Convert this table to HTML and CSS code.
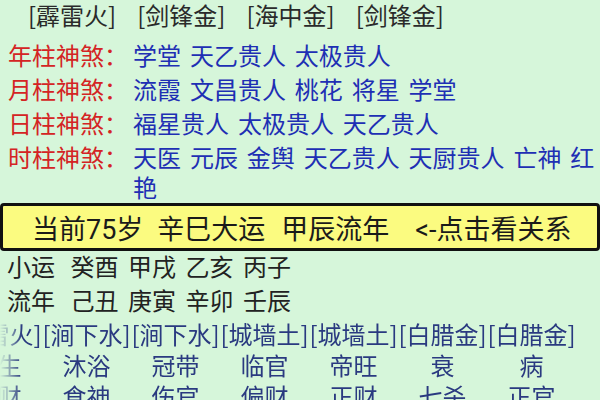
FILE: index.html
```html
<!DOCTYPE html>
<html lang="zh-CN">
<head>
<meta charset="utf-8">
<link rel="stylesheet" href="styles.css">
</head>
<body>
<div class="page">
  <div class="nayin-top">
    <span>[霹雷火]</span><span>[剑锋金]</span><span>[海中金]</span><span>[剑锋金]</span>
  </div>
  <div class="shensha">
    <div class="ss-row"><div class="ss-label">年柱神煞：</div><div class="ss-val">学堂 天乙贵人 太极贵人</div></div>
    <div class="ss-row"><div class="ss-label">月柱神煞：</div><div class="ss-val">流霞 文昌贵人 桃花 将星 学堂</div></div>
    <div class="ss-row"><div class="ss-label">日柱神煞：</div><div class="ss-val">福星贵人 太极贵人 天乙贵人</div></div>
    <div class="ss-row"><div class="ss-label">时柱神煞：</div><div class="ss-val">天医 元辰 金舆 天乙贵人 天厨贵人 亡神 红艳</div></div>
  </div>
  <div class="dayun-bar">
    <span>当前75岁</span><span>辛巳大运</span><span class="gap2">甲辰流年</span><span class="hint">&lt;-点击看关系</span>
  </div>
  <div class="liu">
    <div class="liu-row"><span class="liu-label">小运</span><span>癸酉</span><span>甲戌</span><span>乙亥</span><span>丙子</span></div>
    <div class="liu-row"><span class="liu-label">流年</span><span>己丑</span><span>庚寅</span><span>辛卯</span><span>壬辰</span></div>
  </div>
  <div class="table-scroll">
    <div class="table-grid">
      <div>[霹雷火]</div><div>[涧下水]</div><div>[涧下水]</div><div>[城墙土]</div><div>[城墙土]</div><div>[白腊金]</div><div>[白腊金]</div>
      <div>长生</div><div>沐浴</div><div>冠带</div><div>临官</div><div>帝旺</div><div>衰</div><div>病</div>
      <div>正财</div><div>食神</div><div>伤官</div><div>偏财</div><div>正财</div><div>七杀</div><div>正官</div>
    </div>
  </div>
</div>
</body>
</html>
```

FILE: styles.css
```css
html, body {
  margin: 0;
  padding: 0;
  background: #d6f6da;
  width: 600px;
  height: 400px;
  overflow: hidden;
}
.page {
  font-family: "Noto Sans CJK SC", "Roboto", sans-serif;
  font-size: 24px;
  color: #222;
}
.nayin-top {
  display: flex;
  gap: 21px;
  padding-left: 28px;
  height: 30px;
  line-height: 30px;
  color: #2a2a2a;
}
.shensha {
  margin-top: 10px;
  padding-left: 8px;
  display: flex;
  flex-direction: column;
  gap: 4px;
}
.ss-row {
  display: flex;
  line-height: 30px;
}
.ss-label {
  flex: none;
  width: 125px;
  color: #d42424;
}
.ss-val {
  flex: 1;
  color: #1e2fb4;
  word-spacing: 3.5px;
}
.dayun-bar {
  margin-top: 1px;
  height: 42px;
  border: 3px solid #111;
  border-radius: 4px;
  background: #fbfb80;
  display: flex;
  align-items: center;
  padding-left: 29px;
  gap: 14px;
  font-size: 27px;
  color: #1a1a1a;
  font-family: "Roboto", "Noto Sans CJK SC", sans-serif;
}
.dayun-bar .gap2 { margin-left: 2px; }
.dayun-bar .hint { margin-left: 12px; }
.liu {
  display: flex;
  flex-direction: column;
  gap: 4px;
}
.liu-row {
  display: flex;
  gap: 9.5px;
  padding-left: 7px;
  line-height: 30px;
  color: #222;
}
.liu-label { margin-right: 6px; }
.table-scroll {
  margin-top: 3px;
  overflow: hidden;
  -webkit-mask-image: linear-gradient(to right, rgba(0,0,0,0) 0, rgba(0,0,0,0.35) 8px, #000 22px);
  mask-image: linear-gradient(to right, rgba(0,0,0,0) 0, rgba(0,0,0,0.35) 8px, #000 22px);
}
.table-grid {
  margin-left: -47px;
  display: grid;
  grid-template-columns: repeat(7, 89px);
  line-height: 31px;
  color: #2a3a80;
  text-align: center;
  white-space: nowrap;
}
```
